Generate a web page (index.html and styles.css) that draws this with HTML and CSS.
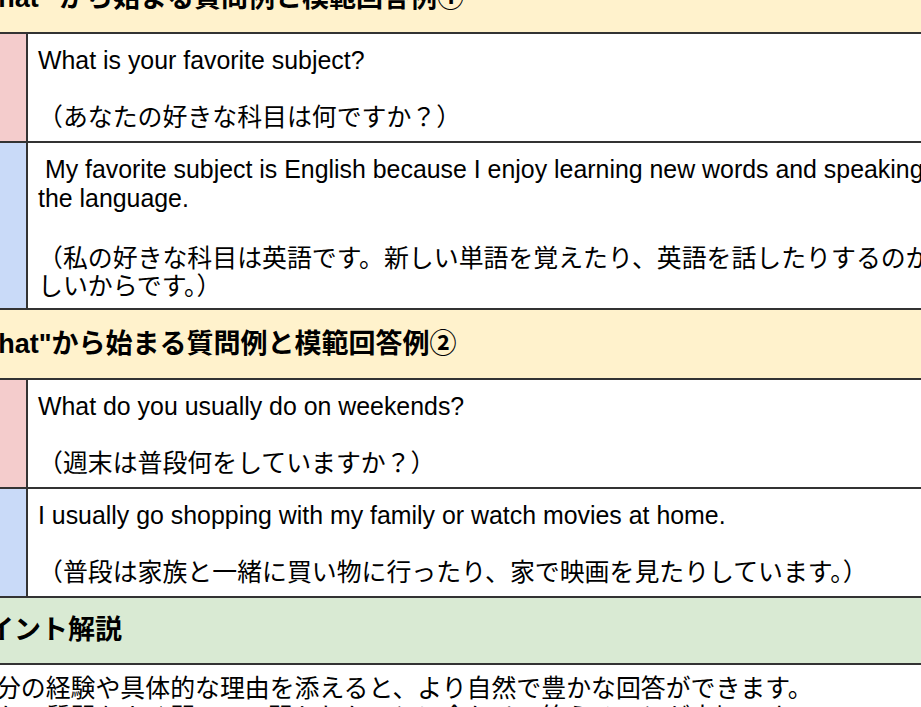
FILE: index.html
```html
<!DOCTYPE html>
<html lang="ja">
<head>
<meta charset="utf-8">
<link rel="stylesheet" href="styles.css">
</head>
<body>
<div class="viewport">
  <table class="sheet">
    <colgroup><col class="c-label"><col class="c-body"></colgroup>
    <tr><td colspan="2" class="head yellow">"What" から始まる質問例と模範回答例①</td></tr>
    <tr>
      <td class="label pink">Q</td>
      <td class="body">What is your favorite subject?<div class="gap"></div>（あなたの好きな科目は何ですか？）</td>
    </tr>
    <tr>
      <td class="label blue">A</td>
      <td class="body body-tight">&nbsp;My favorite subject is English because I enjoy learning new words and speaking the language.<div class="gap gap-wide"></div>（私の好きな科目は英語です。新しい単語を覚えたり、英語を話したりするのが楽しいからです。）</td>
    </tr>
    <tr><td colspan="2" class="head yellow">"What"から始まる質問例と模範回答例②</td></tr>
    <tr>
      <td class="label pink">Q</td>
      <td class="body">What do you usually do on weekends?<div class="gap"></div>（週末は普段何をしていますか？）</td>
    </tr>
    <tr>
      <td class="label blue">A</td>
      <td class="body">I usually go shopping with my family or watch movies at home.<div class="gap"></div>（普段は家族と一緒に買い物に行ったり、家で映画を見たりしています。）</td>
    </tr>
    <tr><td colspan="2" class="head head-short green">ポイント解説</td></tr>
    <tr>
      <td colspan="2" class="note">自分の経験や具体的な理由を添えると、より自然で豊かな回答ができます。<br>また、質問をよく聞いて、聞かれたことに合わせて答えることが大切です。</td>
    </tr>
  </table>
</div>
</body>
</html>
```

FILE: styles.css
```css
html, body {
  margin: 0;
  padding: 0;
  background: #ffffff;
}

.viewport {
  width: 921px;
  height: 707px;
  overflow: hidden;
  background: #ffffff;
}

.sheet {
  border-collapse: collapse;
  margin-left: -52px;
  margin-top: -38px;
  font-family: "Liberation Sans", "Noto Sans CJK JP", sans-serif;
  font-size: 24.9px;
  line-height: 28.5px;
  color: #000;
  table-layout: fixed;
  width: 1024px;
}

.c-label { width: 78px; }

.sheet td {
  border: 2px solid #333;
  vertical-align: middle;
}

.head {
  font-weight: bold;
  font-size: 27px;
  line-height: 36px;
  padding: 16px 10px;
  text-align: left;
}

.head-short {
  padding-top: 14.5px;
  padding-bottom: 14.5px;
}

.yellow { background: #fff2cc; }
.green { background: #d9ead3; }
.pink { background: #f4cccc; }
.blue { background: #c9daf8; }

.label {
  text-align: center;
  color: #222;
}

.body {
  padding: 12px 10px 9.5px 10px;
  vertical-align: top;
}

.body-tight { padding-bottom: 7px; }

.gap { height: 28.5px; }
.gap-wide { height: 31.5px; }

.note {
  padding: 9.5px 10px 10px 21px;
  vertical-align: top;
}
```
